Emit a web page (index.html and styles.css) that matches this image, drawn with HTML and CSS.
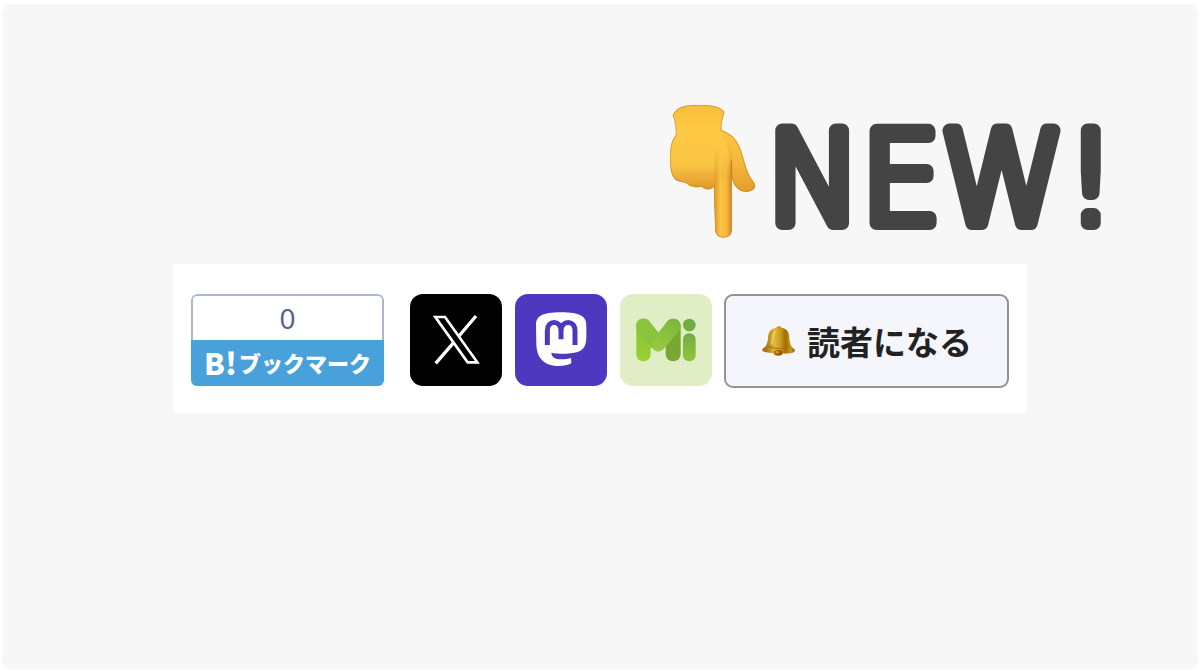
FILE: index.html
```html
<!DOCTYPE html>
<html lang="ja">
<head>
    <meta charset="UTF-8">
    <meta name="viewport" content="width=device-width, initial-scale=1.0">
    <title>NEW!</title>
    <link rel="stylesheet" href="styles.css">
</head>
<body>
    <main class="card">
        <header class="headline">
            <svg class="hand" viewBox="58 42 260 403" aria-hidden="true">
                <defs>
                    <linearGradient id="skin" x1="0" y1="0" x2="0" y2="1">
                        <stop offset="0" stop-color="#f5bd3b"/>
                        <stop offset="0.2" stop-color="#fdca45"/>
                        <stop offset="0.45" stop-color="#fac443"/>
                        <stop offset="0.62" stop-color="#e09a2d"/>
                        <stop offset="1" stop-color="#efaf36"/>
                    </linearGradient>
                    <linearGradient id="finger" x1="0" y1="0" x2="1" y2="0">
                        <stop offset="0" stop-color="#e29b2c"/>
                        <stop offset="0.35" stop-color="#fac343"/>
                        <stop offset="0.7" stop-color="#f5b83b"/>
                        <stop offset="1" stop-color="#cf8227"/>
                    </linearGradient>
                    <linearGradient id="fade" x1="0" y1="0" x2="0" y2="1">
                        <stop offset="0" stop-color="#000"/>
                        <stop offset="0.4" stop-color="#fff"/>
                    </linearGradient>
                    <mask id="fingerFade">
                        <rect x="180" y="170" width="80" height="280" fill="url(#fade)"/>
                    </mask>
                    <linearGradient id="thumb" x1="0" y1="0" x2="0" y2="1">
                        <stop offset="0" stop-color="#fdc944"/>
                        <stop offset="0.5" stop-color="#f6b93c"/>
                        <stop offset="1" stop-color="#df982c"/>
                    </linearGradient>
                    <clipPath id="handShape">
                        <path d="M68 76C78 50 107 44 148 44C190 44 213 50 224 66C219 86 213 104 215 120C248 133 262 150 274 182C286 222 291 251 314 280C320 289 315 298 304 303C288 310 271 304 260 292C251 283 247 271 246 258L246 420C246 436 235 444 221 444C207 444 197 436 196 419L192 291C181 302 166 301 156 291C144 293 129 293 117 286C108 278 101 278 91 276C75 272 67 260 64 247C58 220 59 190 63 168C65 153 71 146 78 134C77 108 75 92 68 76Z"/>
                    </clipPath>
                </defs>
                <g clip-path="url(#handShape)">
                    <path fill="url(#skin)" d="M50 40H330V450H50Z"/>
                    <path fill="url(#thumb)" d="M205 105L330 120V320H246V215C240 185 220 150 205 105Z"/>
                    <path fill="url(#finger)" d="M194 170H246V446H194Z" mask="url(#fingerFade)"/>
                    <path class="crease" d="M245 212V262"/>
                    <path class="edge" d="M68 76C78 50 107 44 148 44C190 44 213 50 224 66C219 86 213 104 215 120C248 133 262 150 274 182C286 222 291 251 314 280C320 289 315 298 304 303C288 310 271 304 260 292C251 283 247 271 246 258L246 420C246 436 235 444 221 444C207 444 197 436 196 419L192 291C181 302 166 301 156 291C144 293 129 293 117 286C108 278 101 278 91 276C75 272 67 260 64 247C58 220 59 190 63 168C65 153 71 146 78 134C77 108 75 92 68 76Z"/>
                </g>
            </svg>
            <h1 class="title">
                <svg class="title-text" viewBox="0 0 341 134">
                    <text x="-3" y="119">NEW!</text>
                </svg>
            </h1>
        </header>

        <section class="share">
            <a class="bookmark" href="#">
                <span class="count">0</span>
                <span class="bookmark-label"><b class="hatena">B!</b>ブックマーク</span>
            </a>
            <div class="social">
                <a class="icon icon-x" href="#" aria-label="X">
                    <svg viewBox="27 27 276 276" aria-hidden="true">
                        <path d="M103 96H132L229 232H200Z" fill="none" stroke="#fff" stroke-width="8"/>
                        <path d="M225 93L174 153M158 173L104 235" stroke="#fff" stroke-width="10"/>
                    </svg>
                </a>
                <a class="icon icon-mastodon" href="#" aria-label="Mastodon">
                    <svg viewBox="24 27 276 276" aria-hidden="true">
                        <path fill="#fff" d="M87 120C87 94 105 82 162 82C220 82 238 94 238 121V157C238 190 224 202 190 205C168 208 149 206 133 203C134 218 145 222 163 223C176 223 185 221 192 219L193 235C181 241 166 244 148 243C107 240 90 216 88 181Z"/>
                        <path fill="none" stroke="#4f38c0" stroke-width="15" d="M121 180V137C121 104 161 104 162 137V163V137C163 104 204 104 204 137V180"/>
                    </svg>
                </a>
                <a class="icon icon-misskey" href="#" aria-label="Misskey">
                    <svg viewBox="22 27 276 276" aria-hidden="true">
                        <defs>
                            <linearGradient id="leafLeft" x1="0" y1="0" x2="0" y2="1">
                                <stop offset="0" stop-color="#84c13a"/>
                                <stop offset="1" stop-color="#9ad132"/>
                            </linearGradient>
                            <linearGradient id="leafRight" x1="0" y1="1" x2="1" y2="0">
                                <stop offset="0" stop-color="#a3d346"/>
                                <stop offset="1" stop-color="#78b33a"/>
                            </linearGradient>
                            <linearGradient id="dot" x1="0" y1="0" x2="0" y2="1">
                                <stop offset="0" stop-color="#73ad43"/>
                                <stop offset="1" stop-color="#8fc63e"/>
                            </linearGradient>
                        </defs>
                        <rect x="71" y="101" width="43" height="128" rx="21" fill="url(#leafLeft)"/>
                        <rect x="159" y="101" width="45" height="128" rx="22" fill="#76a932"/>
                        <path d="M76 108C87 98 101 99 109 108L137 143L164 109C176 97 194 99 201 113C206 123 203 133 196 141L156 188C145 203 128 203 117 189L76 140C68 130 68 117 76 108Z" fill="url(#leafRight)"/>
                        <path d="M71 123C71 110 79 101 92 101C99 101 105 104 109 108L137 143L117 189L76 140C73 136 71 130 71 123Z" fill="#88c43c"/>
                        <circle cx="230" cy="120" r="19" fill="#72ad43"/>
                        <rect x="211" y="145" width="38" height="84" rx="18" fill="url(#dot)"/>
                    </svg>
                </a>
            </div>
            <button class="subscribe" type="button">
                <svg class="bell" viewBox="25 34 106 94" aria-hidden="true">
                    <defs>
                        <linearGradient id="brass" x1="0" y1="0" x2="1" y2="0">
                            <stop offset="0.1" stop-color="#a96f10"/>
                            <stop offset="0.38" stop-color="#e2b83b"/>
                            <stop offset="0.56" stop-color="#c99a1c"/>
                            <stop offset="0.72" stop-color="#a66b04"/>
                            <stop offset="0.88" stop-color="#c99b1c"/>
                            <stop offset="1" stop-color="#8e5807"/>
                        </linearGradient>
                    </defs>
                    <ellipse cx="81" cy="41" rx="8" ry="6" fill="#be8c20"/>
                    <path fill="url(#brass)" d="M48 62C52 44 66 39 83 39C101 40 112 49 113 66C114 88 118 97 129 107C133 112 128 118 118 119C90 122 60 119 40 116C28 114 25 109 33 103C46 94 46 79 48 62Z"/>
                    <ellipse cx="79" cy="118" rx="14" ry="9" fill="#9c5c0c"/>
                    <ellipse cx="75" cy="116" rx="6" ry="4" fill="#d09a2c"/>
                    <path fill="none" stroke="#a66d0b" stroke-width="3" d="M46 97C66 106 93 106 114 101"/>
                    <path fill="none" stroke="#f0cf66" stroke-width="5" stroke-linecap="round" d="M68 53C59 65 63 76 59 89"/>
                </svg>
                読者になる
            </button>
        </section>
    </main>
</body>
</html>
```
FILE: styles.css
```css
* {
    box-sizing: border-box;
}

body {
    margin: 0;
    padding: 4px 2px 2px;
    min-height: 100vh;
    display: flex;
    background-color: #ffffff;
    font-family: "Noto Sans", "Noto Sans CJK JP", sans-serif;
}

.card {
    flex: 1;
    border-radius: 10px;
    background-color: #f7f7f7;
}

.headline {
    display: flex;
    justify-content: flex-end;
    align-items: center;
    gap: 14px;
    padding: 100px 87px 26px 0;
}

.hand {
    width: 87px;
    height: 134px;
}

.crease {
    fill: none;
    stroke: #c87d26;
    stroke-width: 4px;
}

.edge {
    fill: none;
    stroke: #c97f28;
    stroke-width: 5px;
    opacity: 0.65;
}

.title {
    margin: 0;
}

.title-text {
    display: block;
    width: 341px;
    height: 134px;
    overflow: visible;
    fill: #444444;
    stroke: #444444;
    stroke-width: 14px;
    stroke-linejoin: round;
    font-family: "DejaVu Sans Light", "DejaVu Sans", sans-serif;
    font-size: 126px;
    font-weight: 200;
    font-kerning: none;
}

.share {
    display: flex;
    align-items: flex-start;
    width: fit-content;
    margin: 0 auto;
    padding: 30px 18px 25px;
    background-color: #ffffff;
}

.bookmark {
    display: flex;
    flex-direction: column;
    width: 193px;
    height: 92px;
    margin-right: 26px;
    border-radius: 6px;
    overflow: hidden;
    color: #ffffff;
    text-align: center;
    text-decoration: none;
}

.count {
    height: 46px;
    border: 2px solid #a9b8d0;
    border-bottom: none;
    border-radius: 6px 6px 0 0;
    color: #59648a;
    font-size: 28px;
    line-height: 44px;
}

.bookmark-label {
    display: flex;
    flex: 1;
    align-items: center;
    justify-content: center;
    gap: 2px;
    padding-bottom: 2px;
    background-color: #48a1da;
    font-family: "Noto Sans CJK JP", sans-serif;
    font-size: 22px;
    font-weight: 900;
    line-height: 44px;
    white-space: nowrap;
}

.hatena {
    font-size: 30px;
    font-weight: 900;
}

.social {
    display: flex;
    gap: 13px;
    margin-right: 12px;
}

.icon {
    width: 92px;
    height: 92px;
    border-radius: 13px;
}

.icon svg {
    display: block;
    width: 100%;
    height: 100%;
}

.icon-x {
    background-color: #000000;
}

.icon-mastodon {
    background-color: #4f38c0;
}

.icon-misskey {
    background-color: #e0edc5;
}

.subscribe {
    display: flex;
    align-items: center;
    justify-content: center;
    gap: 12px;
    width: 285px;
    height: 94px;
    border: 2px solid #929292;
    border-radius: 9px;
    background-color: #f5f6fb;
    color: #222222;
    font-family: "Noto Sans CJK JP", sans-serif;
    font-size: 33px;
    font-weight: 700;
    cursor: pointer;
}

.bell {
    width: 34px;
    height: 32px;
}
```
